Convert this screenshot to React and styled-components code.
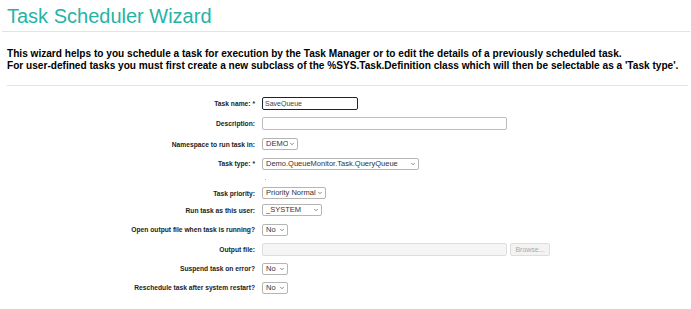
import styled, { createGlobalStyle } from "styled-components";
import { ChevronDown } from "lucide-react";

const GlobalStyle = createGlobalStyle`
  body {
    margin: 0;
    background: #ffffff;
    font-family: "Liberation Sans", Arial, sans-serif;
  }
`;

const Page = styled.div`
  width: 691px;
  height: 309px;
  overflow: hidden;
`;

const TitleBar = styled.div`
  height: 31px;
  border-bottom: 1px solid #e3e3e3;
  margin: 0 1px 0 2px;
  padding-left: 5px;
`;

const Title = styled.h1`
  margin: 0;
  padding-top: 5px;
  font-size: 20px;
  font-weight: normal;
  line-height: 22px;
  color: #25b3a6;
`;

const Intro = styled.p`
  margin: 16px 3px 0 7px;
  padding-bottom: 13px;
  border-bottom: 1px solid #e3e3e3;
  font-size: 10.1px;
  font-weight: bold;
  line-height: 12px;
  color: #000000;
  white-space: nowrap;
`;

const Form = styled.div`
  display: flex;
  flex-direction: column;
  padding-top: 9px;
`;

const Row = styled.div`
  display: flex;
  align-items: center;
  height: ${(p) => p.$h}px;
`;

const Label = styled.label`
  width: 262px;
  flex: none;
  text-align: right;
  padding-right: 7px;
  box-sizing: border-box;
  font-size: 6.7px;
  font-weight: bold;
  color: #222222;
  white-space: nowrap;
`;

const TextInput = styled.input`
  box-sizing: border-box;
  width: ${(p) => p.$w}px;
  height: 13px;
  padding: 0 2px;
  font-family: "Liberation Sans", Arial, sans-serif;
  font-size: 7px;
  color: #444444;
  border: 1px solid ${(p) => (p.$focus ? "#222222" : "#bdbdbd")};
  border-radius: 2px;
  background: #ffffff;
  outline: none;
  &:disabled {
    background: #f5f5f5;
    border-color: #dddddd;
  }
`;

const SelectWrap = styled.span`
  position: relative;
  display: inline-flex;
  width: ${(p) => p.$w}px;
  height: 12px;
`;

const Select = styled.select`
  appearance: none;
  box-sizing: border-box;
  width: 100%;
  height: 100%;
  padding: 0 9px 0 3px;
  margin: 0;
  font-family: "Liberation Sans", Arial, sans-serif;
  font-size: 7.5px;
  line-height: 10px;
  color: #333333;
  background: #ffffff;
  border: 1px solid #b5b5b5;
  border-radius: 2px;
`;

const Chevron = styled(ChevronDown)`
  position: absolute;
  right: 3px;
  top: 3px;
  width: 6px;
  height: 6px;
  color: #444444;
  pointer-events: none;
`;

const Dot = styled.span`
  margin-left: 3px;
  width: 1px;
  height: 1px;
  background: #aaaaaa;
`;

const BrowseButton = styled.button`
  margin-left: 3px;
  width: 40px;
  height: 13px;
  padding: 0;
  font-family: "Liberation Sans", Arial, sans-serif;
  font-size: 7px;
  color: #aaaaaa;
  background: #f3f3f3;
  border: 1px solid #dddddd;
  border-radius: 2px;
`;

const Field = styled.div`
  display: flex;
  align-items: center;
`;

function Dropdown({ width, value }) {
  return (
    <SelectWrap $w={width}>
      <Select defaultValue={value}>
        <option>{value}</option>
      </Select>
      <Chevron strokeWidth={2.5} />
    </SelectWrap>
  );
}

export default function App() {
  return (
    <Page>
      <GlobalStyle />
      <TitleBar>
        <Title>Task Scheduler Wizard</Title>
      </TitleBar>
      <Intro>
        This wizard helps to you schedule a task for execution by the Task Manager or to edit the details of a previously scheduled task.
        <br />
        For user-defined tasks you must first create a new subclass of the %SYS.Task.Definition class which will then be selectable as a 'Task type'.
      </Intro>
      <Form>
        <Row $h={17}>
          <Label>Task name: *</Label>
          <TextInput $w={96} $focus defaultValue="SaveQueue" />
        </Row>
        <Row $h={22}>
          <Label>Description:</Label>
          <TextInput $w={245} />
        </Row>
        <Row $h={20}>
          <Label>Namespace to run task in:</Label>
          <Dropdown width={36} value="DEMO" />
        </Row>
        <Row $h={19}>
          <Label>Task type: *</Label>
          <Dropdown width={157} value="Demo.QueueMonitor.Task.QueryQueue" />
        </Row>
        <Row $h={13}>
          <Label />
          <Dot />
        </Row>
        <Row $h={14}>
          <Label>Task priority:</Label>
          <Dropdown width={64} value="Priority Normal" />
        </Row>
        <Row $h={20}>
          <Label>Run task as this user:</Label>
          <Dropdown width={60} value="_SYSTEM" />
        </Row>
        <Row $h={19}>
          <Label>Open output file when task is running?</Label>
          <Dropdown width={26} value="No" />
        </Row>
        <Row $h={20}>
          <Label>Output file:</Label>
          <Field>
            <TextInput $w={245} disabled />
            <BrowseButton disabled>Browse...</BrowseButton>
          </Field>
        </Row>
        <Row $h={19}>
          <Label>Suspend task on error?</Label>
          <Dropdown width={26} value="No" />
        </Row>
        <Row $h={19}>
          <Label>Reschedule task after system restart?</Label>
          <Dropdown width={26} value="No" />
        </Row>
      </Form>
    </Page>
  );
}
